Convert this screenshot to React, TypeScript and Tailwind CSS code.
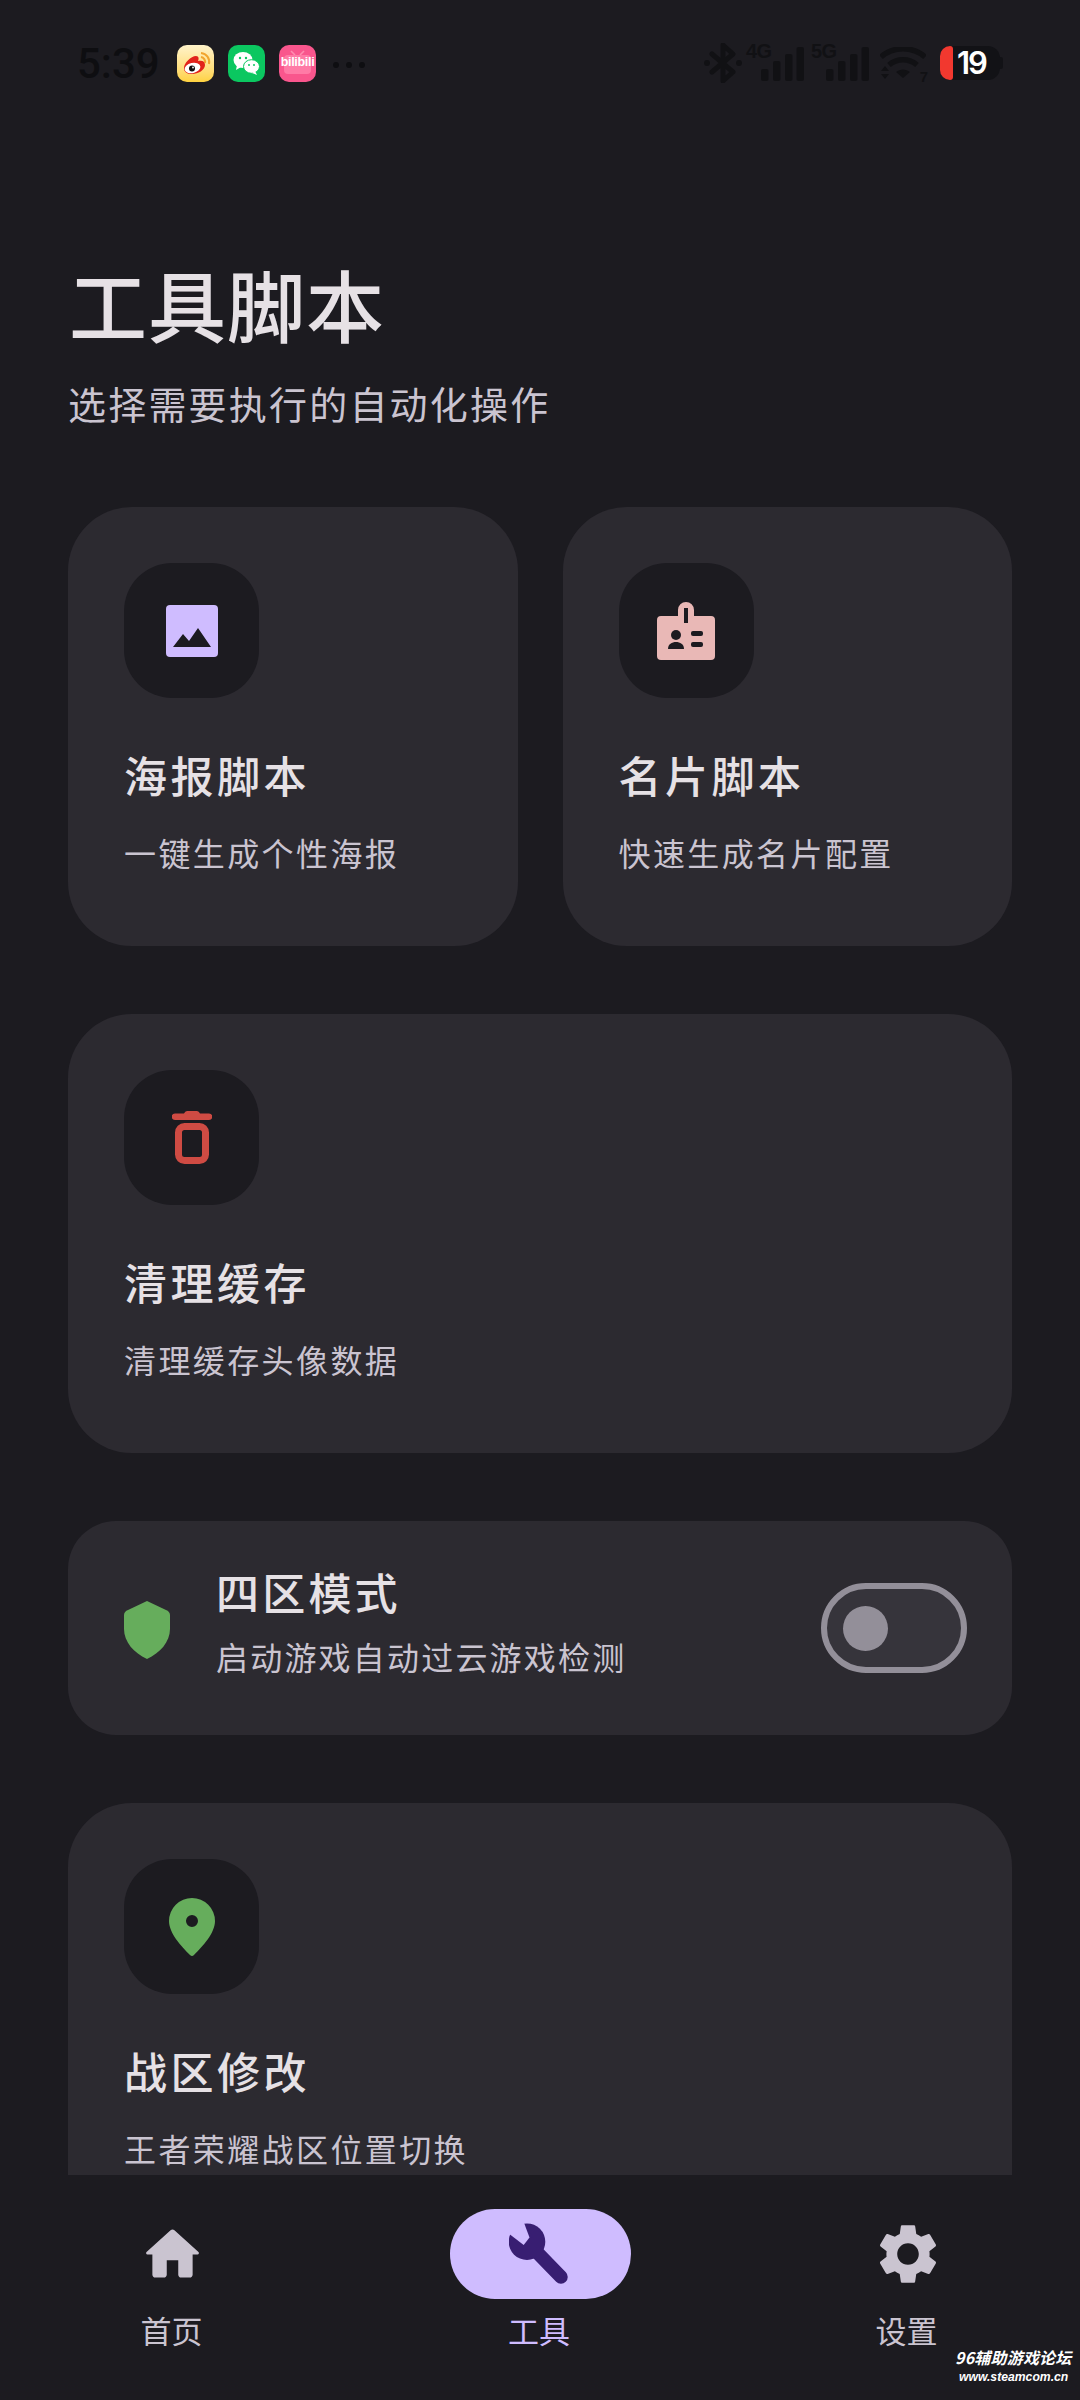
import React from "react";

const CJK = { fontFamily: '"Noto Sans CJK SC", "Noto Sans", sans-serif' };

function Weibo() {
  return (
    <div className="w-[37px] h-[37px] rounded-[10px] bg-gradient-to-b from-[#fff3c9] to-[#ffd23f] overflow-hidden">
      <svg width="37" height="37" viewBox="0 0 37 37">
        <path d="M24 8a9 9 0 0 1 8 11" fill="none" stroke="#f2a52e" strokeWidth="2" />
        <path d="M24 12a5 5 0 0 1 4 6" fill="none" stroke="#f2a52e" strokeWidth="2" />
        <path d="M7 23c0-5 7-12 12-12 3 0 3 3 2 5 4-1 7 0 7 4 0 5-7 9-13 9-5 0-8-2-8-6z" fill="#e2231a" />
        <ellipse cx="15.500" cy="23" rx="8" ry="5" fill="#fff" transform="rotate(-12 15.500 23)" />
        <circle cx="15" cy="23.500" r="3" fill="#111" />
        <circle cx="16" cy="22.500" r="0.9" fill="#fff" />
      </svg>
    </div>
  );
}

function WeChat() {
  return (
    <div className="w-[37px] h-[37px] rounded-[10px] bg-[#0bc760] overflow-hidden">
      <svg width="37" height="37" viewBox="0 0 37 37">
        <ellipse cx="15" cy="15" rx="9.500" ry="8" fill="#fff" />
        <path d="M9 20l-1 5 5-3z" fill="#fff" />
        <circle cx="12" cy="13" r="1.200" fill="#0bc760" />
        <circle cx="18" cy="13" r="1.200" fill="#0bc760" />
        <ellipse cx="23.500" cy="21.500" rx="8" ry="6.800" fill="#fff" stroke="#0bc760" strokeWidth="1" />
        <path d="M27 26l2 4-5-2z" fill="#fff" />
        <circle cx="21" cy="20" r="1" fill="#0bc760" />
        <circle cx="26" cy="20" r="1" fill="#0bc760" />
      </svg>
    </div>
  );
}

function Bili() {
  return (
    <div className="relative w-[37px] h-[37px] rounded-[10px] bg-[#f9568d] overflow-hidden">
      <svg width="37" height="37" viewBox="0 0 37 37" className="absolute inset-0">
        <path d="M12 6l4 4M25 6l-4 4" stroke="#ff8db0" strokeWidth="1.600" />
        <rect x="5" y="10" width="27" height="19" rx="4" fill="#ff7aa6" />
      </svg>
      <span
        className="absolute left-0 right-0 top-[10px] text-center text-[12.5px] leading-[15px] font-bold tracking-[-0.3px] text-white"
        style={{ fontFamily: '"Liberation Sans", sans-serif' }}
      >
        bilibili
      </span>
    </div>
  );
}

function Bars() {
  return (
    <svg width="43" height="34" viewBox="0 0 43 34" className="-ml-[12px] mt-[2px]">
      <rect x="0" y="22" width="7.500" height="12" rx="2" fill="#111114" />
      <rect x="12" y="14" width="7.500" height="20" rx="2" fill="#111114" />
      <rect x="24" y="7" width="7.500" height="27" rx="2" fill="#111114" />
      <rect x="35.500" y="0" width="7.500" height="34" rx="2" fill="#111114" />
    </svg>
  );
}

function StatusBar() {
  return (
    <div className="h-[125px] pl-[77px] pr-[77px] flex items-start justify-between pt-[45px]">
      <div className="flex items-center">
        <span
          className="text-[42px] leading-[37px] font-medium text-[#0e0e11] w-[100px]"
          style={{ fontFamily: "Roboto, sans-serif" }}
        >
          5:39
        </span>
        <div className="flex gap-[14px]">
          <Weibo />
          <WeChat />
          <Bili />
        </div>
        <div className="flex gap-[7px] ml-[17px] mt-[2px]">
          <div className="w-[6px] h-[6px] rounded-full bg-[#0e0e11]" />
          <div className="w-[6px] h-[6px] rounded-full bg-[#0e0e11]" />
          <div className="w-[6px] h-[6px] rounded-full bg-[#0e0e11]" />
        </div>
      </div>
      <div className="flex items-start">
        <svg width="38" height="40" viewBox="0 0 38 40" className="-mt-[2px]">
          <path d="M8 11l21 18-10 9V2l10 9-21 18" fill="none" stroke="#111114" strokeWidth="5" strokeLinejoin="round" strokeLinecap="round" />
          <circle cx="3" cy="20" r="3" fill="#111114" />
          <circle cx="35" cy="20" r="3" fill="#111114" />
        </svg>
        <div className="flex ml-[4px] mr-[7px]">
          <span className="text-[20px] leading-[18px] font-bold text-[#111114] w-[27px] -mt-[3px] tracking-[-0.5px]" style={{ fontFamily: '"Liberation Sans", sans-serif' }}>4G</span>
          <Bars />
        </div>
        <div className="flex mr-[11px]">
          <span className="text-[20px] leading-[18px] font-bold text-[#111114] w-[27px] -mt-[3px] tracking-[-0.5px]" style={{ fontFamily: '"Liberation Sans", sans-serif' }}>5G</span>
          <Bars />
        </div>
        <div className="relative w-[46px] h-[34px] mr-[14px] mt-[2px]">
          <svg width="46" height="34" viewBox="0 0 46 34" className="absolute inset-0">
            <path d="M1 10c12-11 32-11 44 0" fill="none" stroke="#111114" strokeWidth="5.500" />
            <path d="M9 18c8-7 20-7 28 0" fill="none" stroke="#111114" strokeWidth="5.500" />
            <path d="M16 25c4-3.500 10-3.500 14 0l-7 6z" fill="#111114" />
            <path d="M1 24l4-5 4 5zM1 27h8l-4 5z" fill="#111114" />
          </svg>
          <span className="absolute right-[-2px] bottom-[-3px] text-[15px] leading-[15px] font-bold text-[#111114]" style={{ fontFamily: '"Liberation Sans", sans-serif' }}>7</span>
        </div>
        <div className="flex items-center mt-[1px]">
          <div className="w-[60px] h-[34px] rounded-[12px] bg-[#121216] flex items-center">
            <div className="w-[13px] h-[34px] bg-[#f2382f] rounded-l-[10px] rounded-r-[3px] shrink-0" />
            <span className="ml-[4px] text-[31px] leading-[34px] font-semibold text-white tracking-[-2px]" style={{ fontFamily: "Inter, sans-serif" }}>19</span>
          </div>
          <div className="w-[3px] h-[12px] bg-[#121216] rounded-r-[2px]" />
        </div>
      </div>
    </div>
  );
}

function IconBox({ children }: { children: React.ReactNode }) {
  return (
    <div className="w-[135px] h-[135px] rounded-[48px] bg-[#1c1b20] flex items-center justify-center shrink-0">
      {children}
    </div>
  );
}

function Card({ icon, title, sub, className }: { icon: React.ReactNode; title: string; sub: string; className?: string }) {
  return (
    <div className={"bg-[#2c2a30] rounded-[64px] pt-[56px] px-[56px] " + (className ?? "")}>
      <IconBox>{icon}</IconBox>
      <div className="mt-[46px] text-[43px] leading-[60px] font-medium tracking-[3.5px] text-[#e6e1e5]">{title}</div>
      <div className="mt-[26px] text-[32px] leading-[44px] tracking-[2.4px] text-[#cac4d0] whitespace-nowrap">{sub}</div>
    </div>
  );
}

const ImageIcon = (
  <svg width="52" height="52" viewBox="0 0 52 52">
    <rect width="52" height="52" rx="4" fill="#cfbcff" />
    <path d="M7 42l10-13 6 7 9-13 13 19z" fill="#1c1b20" />
  </svg>
);

const BadgeIcon = (
  <svg width="58" height="58" viewBox="0 0 58 58">
    <path d="M4 14h17V8a8 8 0 0 1 16 0v6h17a4 4 0 0 1 4 4v36a4 4 0 0 1-4 4H4a4 4 0 0 1-4-4V18a4 4 0 0 1 4-4z" fill="#e9b8b6" />
    <rect x="27" y="6" width="4" height="15" fill="#1c1b20" />
    <circle cx="19" cy="33" r="5" fill="#1c1b20" />
    <path d="M11 47c0-5 4-7 8-7s8 2 8 7z" fill="#1c1b20" />
    <rect x="34" y="29" width="12" height="5" rx="2" fill="#1c1b20" />
    <rect x="34" y="40" width="12" height="5" rx="2" fill="#1c1b20" />
  </svg>
);

const TrashIcon = (
  <svg width="40" height="53" viewBox="0 0 40 53">
    <path d="M12 2.500Q13 0 15 0h10q2 0 3 2.500h9a3 3 0 0 1 0 6.500H3a3 3 0 0 1 0-6.500z" fill="#cf4b43" />
    <rect x="6.500" y="15.500" width="27" height="34" rx="6" fill="none" stroke="#cf4b43" strokeWidth="7" />
  </svg>
);

const PinIcon = (
  <svg width="46" height="58" viewBox="0 0 46 58">
    <path fillRule="evenodd" d="M23 0a23 23 0 0 1 23 23c0 12-12 25-21 34a3 3 0 0 1-4 0C12 48 0 35 0 23A23 23 0 0 1 23 0zm0 17a6 6 0 1 0 0 12 6 6 0 0 0 0-12z" fill="#66ad5c" />
  </svg>
);

function NavItem({ label, active, children }: { label: string; active?: boolean; children: React.ReactNode }) {
  return (
    <div className="w-[181px] flex flex-col items-center">
      <div className={"w-[181px] h-[90px] rounded-[45px] flex items-center justify-center " + (active ? "bg-[#cfbcff]" : "")}>
        {children}
      </div>
      <div className={"mt-[9px] text-[31px] leading-[44px] -ml-[2px] " + (active ? "text-[#cfbcff]" : "text-[#cac4d0]")}>{label}</div>
    </div>
  );
}

export default function App() {
  return (
    <div className="relative w-[1080px] h-[2400px] bg-[#1c1b20] overflow-hidden flex flex-col" style={CJK}>
      <StatusBar />
      <div className="flex-1 overflow-hidden px-[68px]">
        <div className="mt-[133px] text-[78px] leading-[90px] font-medium tracking-[1px] text-[#e6e1e5] ml-[1px]">工具脚本</div>
        <div className="mt-[27px] text-[38px] leading-[56px] tracking-[2.2px] text-[#cac4d0]">选择需要执行的自动化操作</div>
        <div className="mt-[76px] flex gap-[45px]">
          <Card className="flex-1 h-[439px]" icon={ImageIcon} title="海报脚本" sub="一键生成个性海报" />
          <Card className="flex-1 h-[439px]" icon={BadgeIcon} title="名片脚本" sub="快速生成名片配置" />
        </div>
        <Card className="mt-[68px] h-[439px]" icon={TrashIcon} title="清理缓存" sub="清理缓存头像数据" />
        <div className="mt-[68px] h-[214px] rounded-[48px] bg-[#2c2a30] flex items-center pl-[56px] pr-[45px]">
          <svg width="46" height="58" viewBox="0 0 46 58" className="shrink-0 mt-[3px]">
            <path d="M23 0l19 9a6 6 0 0 1 4 6v13c0 13-10 24-23 30C10 52 0 41 0 28V15a6 6 0 0 1 4-6z" fill="#66ad5c" />
          </svg>
          <div className="ml-[46px] flex-1 -mt-[18px]">
            <div className="text-[43px] leading-[60px] font-medium tracking-[3.2px] text-[#e6e1e5]">四区模式</div>
            <div className="mt-[13px] text-[32px] leading-[44px] tracking-[2.2px] text-[#cac4d0]">启动游戏自动过云游戏检测</div>
          </div>
          <div className="w-[146px] h-[90px] rounded-full border-[6px] border-[#938f99] bg-[#36343b] flex items-center pl-[16px]">
            <div className="w-[45px] h-[45px] rounded-full bg-[#938f99]" />
          </div>
        </div>
        <Card className="mt-[68px] h-[439px]" icon={PinIcon} title="战区修改" sub="王者荣耀战区位置切换" />
      </div>
      <div className="h-[225px] bg-[#1c1b20] px-[82px] pt-[34px] flex justify-between shrink-0">
        <NavItem label="首页">
          <svg width="69" height="69" viewBox="0 0 24 24" fill="#cac4d0">
            <path d="M10 19v-5h4v5c0 .55.45 1 1 1h3c.55 0 1-.45 1-1v-7h1.700c.46 0 .68-.57.33-.87L12.670 3.600c-.38-.34-.96-.34-1.340 0l-8.360 7.530c-.34.3-.13.87.33.87H5v7c0 .55.45 1 1 1h3c.55 0 1-.45 1-1z" />
          </svg>
        </NavItem>
        <NavItem label="工具" active>
          <svg width="62" height="62" viewBox="0 0 62 62">
            <circle cx="18" cy="18.700" r="18.300" fill="#381e72" />
            <path d="M18 19l34 35" stroke="#381e72" strokeWidth="13.500" strokeLinecap="round" />
            <path d="M14 -3L-6 6 14.700 22 20.500 14.600z" fill="#cfbcff" />
          </svg>
        </NavItem>
        <NavItem label="设置">
          <svg width="72" height="72" viewBox="0 0 24 24" fill="#cac4d0">
            <path d="M19.14,12.94c0.04-0.3,0.06-0.61,0.06-0.94c0-0.32-0.02-0.64-0.07-0.94l2.03-1.58c0.18-0.14,0.23-0.41,0.12-0.61 l-1.92-3.32c-0.12-0.22-0.37-0.29-0.59-0.22l-2.39,0.96c-0.5-0.38-1.03-0.7-1.62-0.94L14.4,2.81c-0.04-0.24-0.24-0.41-0.48-0.41 h-3.84c-0.24,0-0.43,0.17-0.47,0.41L9.25,5.35C8.66,5.59,8.12,5.92,7.63,6.29L5.24,5.33c-0.22-0.08-0.47,0-0.59,0.22L2.74,8.87 C2.62,9.08,2.66,9.34,2.86,9.48l2.03,1.58C4.84,11.36,4.8,11.69,4.8,12s0.02,0.64,0.07,0.94l-2.03,1.58 c-0.18,0.14-0.23,0.41-0.12,0.61l1.92,3.32c0.12,0.22,0.37,0.29,0.59,0.22l2.39-0.96c0.5,0.38,1.03,0.7,1.62,0.94l0.36,2.54 c0.05,0.24,0.24,0.41,0.48,0.41h3.84c0.24,0,0.44-0.17,0.47-0.41l0.36-2.54c0.59-0.24,1.13-0.56,1.62-0.94l2.39,0.96 c0.22,0.08,0.47,0,0.59-0.22l1.92-3.32c0.12-0.22,0.07-0.47-0.12-0.61L19.14,12.94z M12,15.6c-1.98,0-3.6-1.62-3.6-3.6 s1.62-3.6,3.6-3.6s3.6,1.62,3.6,3.6S13.98,15.6,12,15.6z" />
          </svg>
        </NavItem>
      </div>
      <div className="absolute right-[9px] bottom-[13px] w-[116px] text-white italic font-bold">
        <div className="text-[16px] leading-[20px] whitespace-nowrap tracking-[0.2px]">96辅助游戏论坛</div>
        <div className="ml-[4px] text-[12.2px] leading-[20px] whitespace-nowrap" style={{ fontFamily: '"Liberation Sans", sans-serif' }}>www.steamcom.cn</div>
      </div>
    </div>
  );
}
